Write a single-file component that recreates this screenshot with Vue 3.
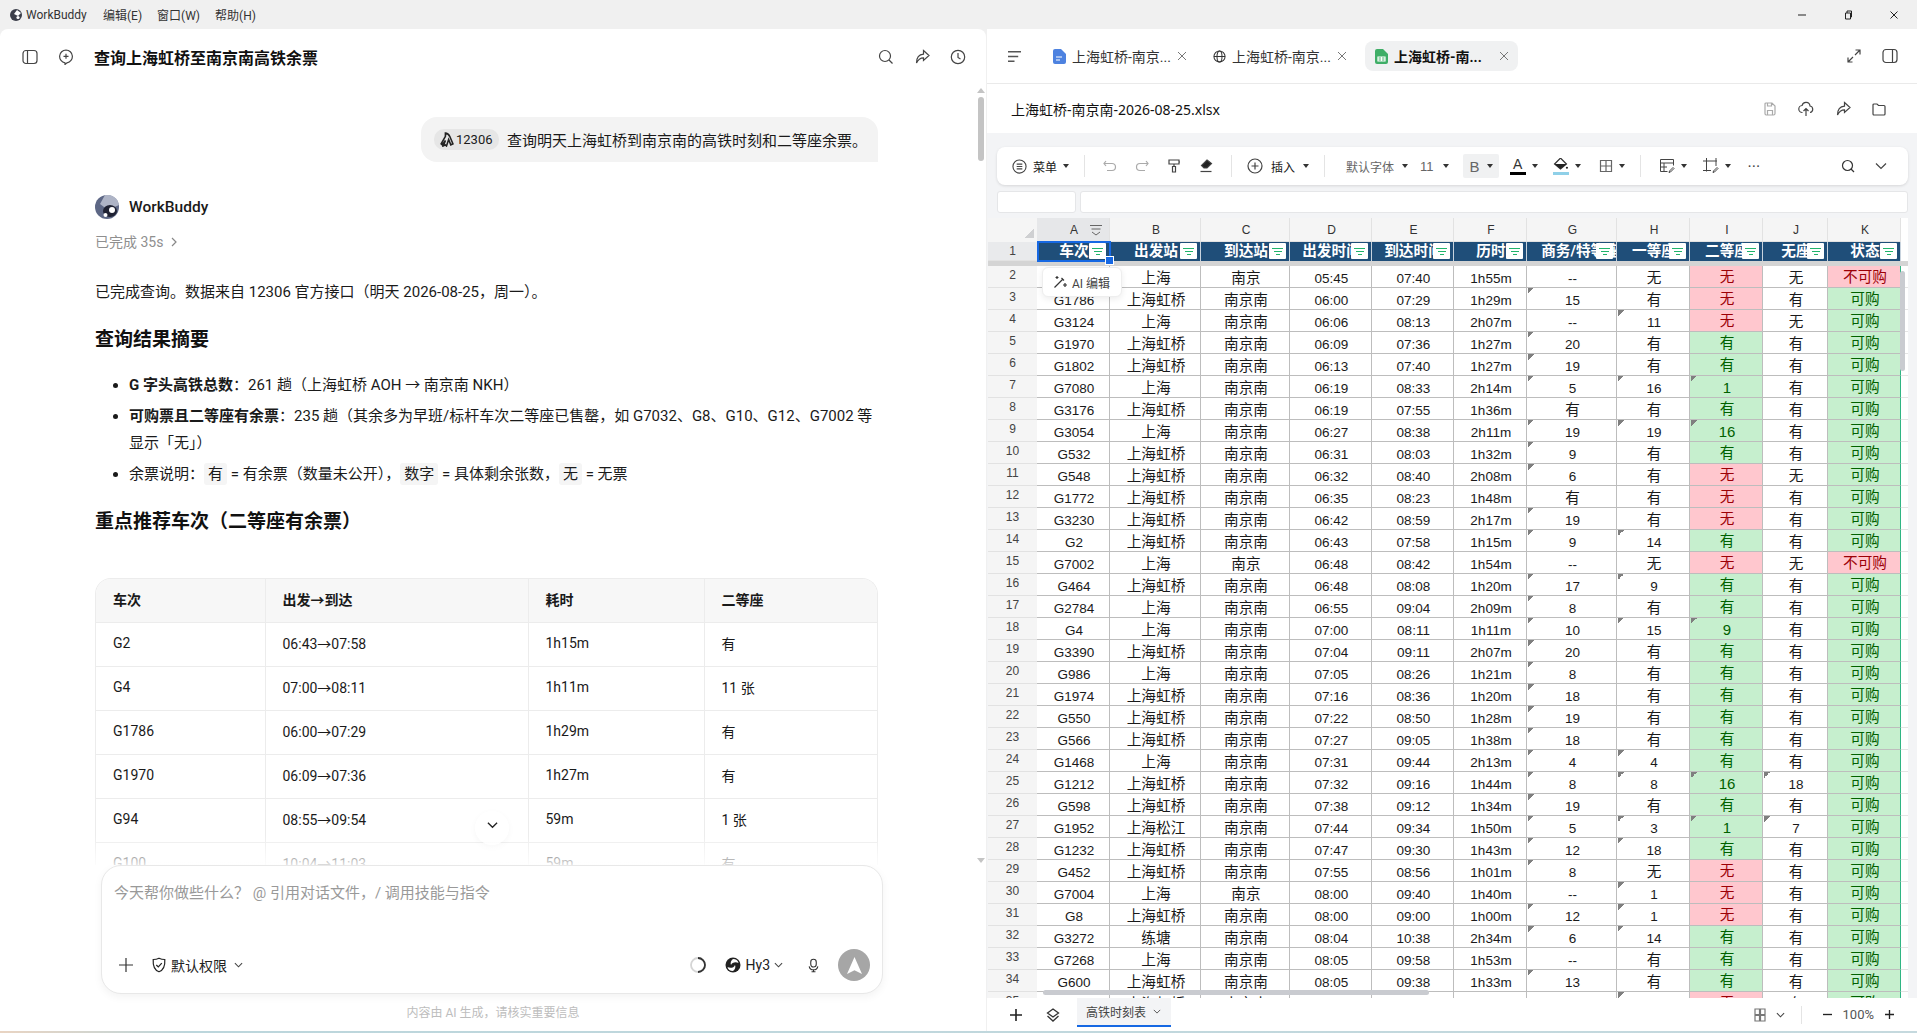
<script setup>
const columns = ['A', 'B', 'C', 'D', 'E', 'F', 'G', 'H', 'I', 'J', 'K']
const headers = ['车次', '出发站', '到达站', '出发时间', '到达时间', '历时', '商务/特等座', '一等座', '二等座', '无座', '状态']

// 一个星号 = 单元格左上角有批注三角
const raw = [
  '- 上海 南京 05:45 07:40 1h55m -- 无 无 无 不可购',
  'G1786 上海虹桥 南京南 06:00 07:29 1h29m 15* 有 无 有 可购',
  'G3124 上海 南京南 06:06 08:13 2h07m -- 11* 无 无 可购',
  'G1970 上海虹桥 南京南 06:09 07:36 1h27m 20* 有 有 有 可购',
  'G1802 上海虹桥 南京南 06:13 07:40 1h27m 19* 有 有 有 可购',
  'G7080 上海 南京南 06:19 08:33 2h14m 5* 16* 1* 有 可购',
  'G3176 上海虹桥 南京南 06:19 07:55 1h36m 有 有 有 有 可购',
  'G3054 上海 南京南 06:27 08:38 2h11m 19* 19* 16* 有 可购',
  'G532 上海虹桥 南京南 06:31 08:03 1h32m 9* 有 有 有 可购',
  'G548 上海虹桥 南京南 06:32 08:40 2h08m 6* 有 无 无 可购',
  'G1772 上海虹桥 南京南 06:35 08:23 1h48m 有 有 无 有 可购',
  'G3230 上海虹桥 南京南 06:42 08:59 2h17m 19* 有 无 有 可购',
  'G2 上海虹桥 南京南 06:43 07:58 1h15m 9* 14* 有 有 可购',
  'G7002 上海 南京 06:48 08:42 1h54m -- 无 无 无 不可购',
  'G464 上海虹桥 南京南 06:48 08:08 1h20m 17* 9* 有 有 可购',
  'G2784 上海 南京南 06:55 09:04 2h09m 8* 有 有 有 可购',
  'G4 上海 南京南 07:00 08:11 1h11m 10* 15* 9* 有 可购',
  'G3390 上海虹桥 南京南 07:04 09:11 2h07m 20* 有 有 有 可购',
  'G986 上海 南京南 07:05 08:26 1h21m 8* 有 有 有 可购',
  'G1974 上海虹桥 南京南 07:16 08:36 1h20m 18* 有 有 有 可购',
  'G550 上海虹桥 南京南 07:22 08:50 1h28m 19* 有 有 有 可购',
  'G566 上海虹桥 南京南 07:27 09:05 1h38m 18* 有 有 有 可购',
  'G1468 上海 南京南 07:31 09:44 2h13m 4* 4* 有 有 可购',
  'G1212 上海虹桥 南京南 07:32 09:16 1h44m 8* 8* 16* 18* 可购',
  'G598 上海虹桥 南京南 07:38 09:12 1h34m 19* 有 有 有 可购',
  'G1952 上海松江 南京南 07:44 09:34 1h50m 5* 3* 1* 7* 可购',
  'G1232 上海虹桥 南京南 07:47 09:30 1h43m 12* 18* 有 有 可购',
  'G452 上海虹桥 南京南 07:55 08:56 1h01m 8* 无 无 有 可购',
  'G7004 上海 南京 08:00 09:40 1h40m -- 1* 无 有 可购',
  'G8 上海虹桥 南京南 08:00 09:00 1h00m 12* 1* 无 有 可购',
  'G3272 练塘 南京南 08:04 10:38 2h34m 6* 14* 有 有 可购',
  'G7268 上海 南京南 08:05 09:58 1h53m -- 有 有 有 可购',
  'G600 上海虹桥 南京南 08:05 09:38 1h33m 13* 有 有 有 可购',
  'G7006 上海虹桥 南京南 08:09 09:51 1h42m 7 9* 无 有 可购',
]

const rows = raw.map((line, r) => ({
  num: r + 2,
  cells: line.split(' ').map((v, c) => {
    const text = v === '-' ? '' : v.replace('*', '')
    const classes = [/[\u4e00-\u9fff]/.test(text) ? 'cjk' : 'num']
    if (v.endsWith('*')) classes.push('flag')
    if (c === 8) classes.push(text === '无' ? 'bad' : 'good')
    if (c === 10) classes.push(text === '不可购' ? 'bad' : 'good')
    return { text, classes }
  }),
}))

const trains = [
  ['G2', '06:43→07:58', '1h15m', '有'],
  ['G4', '07:00→08:11', '1h11m', '11 张'],
  ['G1786', '06:00→07:29', '1h29m', '有'],
  ['G1970', '06:09→07:36', '1h27m', '有'],
  ['G94', '08:55→09:54', '59m', '1 张'],
  ['G100', '10:04→11:03', '59m', '有'],
]
</script>

<template>
  <div class="app">
    <div class="titlebar">
      <svg class="tb-logo" viewBox="0 0 12 12"><circle cx="6" cy="6" r="6" fill="#3c3f4a" /><path d="M7 1 11 4 8 7 4 5Z" fill="#fff" /><circle cx="8" cy="8.5" r="1.6" fill="#fff" /></svg>
      <span class="tb-name">WorkBuddy</span>
      <span class="tb-menu">编辑(E)</span>
      <span class="tb-menu">窗口(W)</span>
      <span class="tb-menu">帮助(H)</span>
      <div class="winctl">
        <svg viewBox="0 0 10 10"><path d="M1 5h8" /></svg>
        <svg viewBox="0 0 10 10"><path d="M2.5 3h5v6h-5zM4 3V1h4.500v6H7.500" /></svg>
        <svg viewBox="0 0 10 10"><path d="M1.500 1.500l7 7M8.500 1.500l-7 7" /></svg>
      </div>
    </div>

    <div class="main">
      <section class="left">
        <header class="chat-head">
          <svg class="ic16" viewBox="0 0 16 16"><rect x="1" y="1.500" width="14" height="13" rx="3" /><path d="M5.500 2v12" /></svg>
          <svg class="ic16 new-chat" viewBox="0 0 16 16"><path d="M8 1a6.500 6.500 0 0 1 1 12.900L7 15.500v-1.600A6.500 6.500 0 0 1 8 1ZM8 4.800v5M5.500 7.300h5" /></svg>
          <h1 class="chat-title">查询上海虹桥至南京南高铁余票</h1>
          <div class="head-tools">
            <svg class="ic16" viewBox="0 0 16 16"><circle cx="7" cy="7" r="5.500" /><path d="m11 11 3.500 3.500" /></svg>
            <svg class="ic16" viewBox="0 0 16 16"><path d="M9.500 1.500 15 6.500l-5.500 5V8.800C6 8.800 4 10.500 2.500 14c0-5.500 2.500-8.500 7-8.900Z" /></svg>
            <svg class="ic16" viewBox="0 0 16 16"><circle cx="8" cy="8" r="6.700" /><path d="M8 4v4.500l2.500 1.500" /></svg>
          </div>
        </header>

        <div class="chat">
          <div class="bubble">
            <span class="chip">
              <svg viewBox="0 0 14 14"><path d="M6 1c2 0 3 1 4 3l3 7-2 1-2-5-2 6-1-1-2 1 2-5-3 4-1-1 4-7Z" fill="none" stroke="#222" stroke-width="1.500" /></svg>
              12306
            </span>
            查询明天上海虹桥到南京南的高铁时刻和二等座余票。
          </div>

          <div class="bot">
            <svg class="avatar" viewBox="0 0 24 24">
              <circle cx="12" cy="12" r="12" fill="#5d6785" />
              <path d="M10 0a12 12 0 0 1 14 10L13 15 5 9Z" fill="#aeb4c6" />
              <ellipse cx="15" cy="16" rx="7" ry="6" fill="#1f2233" />
              <circle cx="17" cy="15" r="3" fill="#fff" />
              <circle cx="10.500" cy="20" r="2" fill="#fff" />
            </svg>
            <span>WorkBuddy</span>
          </div>
          <div class="done">已完成 35s
            <svg viewBox="0 0 10 10"><path d="m3 1 4 4-4 4" /></svg>
          </div>

          <p class="para">已完成查询。数据来自 12306 官方接口（明天 2026-08-25，周一）。</p>
          <h2 class="h1st">查询结果摘要</h2>
          <ul class="summary">
            <li><b>G 字头高铁总数</b>：261 趟（上海虹桥 AOH → 南京南 NKH）</li>
            <li><b>可购票且二等座有余票</b>：235 趟（其余多为早班/标杆车次二等座已售罄，如 G7032、G8、G10、G12、G7002 等显示「无」）</li>
            <li>余票说明：<code>有</code> = 有余票（数量未公开），<code>数字</code> = 具体剩余张数，<code>无</code> = 无票</li>
          </ul>
          <h2 class="h2nd">重点推荐车次（二等座有余票）</h2>

          <div class="table-wrap">
            <table>
              <thead>
                <tr><th>车次</th><th>出发→到达</th><th>耗时</th><th>二等座</th></tr>
              </thead>
              <tbody>
                <tr v-for="t in trains" :key="t[0]">
                  <td v-for="v in t" :key="v">{{ v }}</td>
                </tr>
              </tbody>
            </table>
          </div>

          <div class="to-bottom">
            <svg viewBox="0 0 12 8"><path d="m1 1.500 5 5 5-5" /></svg>
          </div>
          <div class="fade"></div>
          <div class="chat-thumb"></div>
          <svg class="arrow-up" viewBox="0 0 8 5"><path d="M4 0 8 5H0Z" /></svg>
          <svg class="arrow-down" viewBox="0 0 8 5"><path d="M0 0h8L4 5Z" /></svg>
        </div>

        <div class="composer">
          <div class="placeholder">今天帮你做些什么？ @ 引用对话文件，/ 调用技能与指令</div>
          <div class="comp-row">
            <svg class="plus" viewBox="0 0 14 14"><path d="M7 0v14M0 7h14" /></svg>
            <svg class="perm" viewBox="0 0 16 16"><path d="M8 1.200c2 1 3.500 1.300 5.800 1.300 .4 6-1 10.500-5.800 12.300C3.200 13 1.800 8.500 2.200 2.500 4.500 2.500 6 2.200 8 1.200Z" /><path d="m5.300 8 2 2 3.500-3.800" /></svg>
            <span class="perm-text">默认权限</span>
            <svg class="chev" viewBox="0 0 10 6"><path d="m1 1 4 4 4-4" /></svg>
            <div class="comp-right">
              <svg class="ring" viewBox="0 0 18 18"><circle cx="9" cy="9" r="7" stroke="#d5d5d5" /><path d="M9 2a7 7 0 0 1 0 14" stroke="#333" /></svg>
              <svg class="hy" viewBox="0 0 16 16"><circle cx="8" cy="8" r="7.500" fill="#222" /><path d="M8 2c3 0 5 1.500 5.500 4C11 4.500 7 5 6 8 5 6 6 3.500 8 2ZM8 14c-3 0-5-1.500-5.500-4C5 11.500 9 11 10 8c1 2 0 4.500-2 6Z" fill="#fff" /></svg>
              <span class="hy-text">Hy3</span>
              <svg class="chev" viewBox="0 0 10 6"><path d="m1 1 4 4 4-4" /></svg>
              <svg class="mic" viewBox="0 0 14 18"><rect x="3.500" y="1" width="7" height="10" rx="3.500" /><path d="M1.500 10c.5 3 2.500 4.500 5.500 4.500s5-1.500 5.500-4.500M7 14.500V17M4.500 17h5" /></svg>
              <div class="send">
                <svg viewBox="0 0 16 18"><path d="M8 0 16 18 8 14 0 18Z" fill="#fff" /></svg>
              </div>
            </div>
          </div>
        </div>
        <div class="disclaimer">内容由 AI 生成，请核实重要信息</div>
      </section>

      <section class="right">
        <div class="tabs">
          <svg class="burger" viewBox="0 0 16 14"><path d="M1 2h14M1 7h11M1 12h7" /></svg>
          <div class="tab first">
            <svg class="tab-ic" viewBox="0 0 13 15"><path d="M2 0h6l5 5v8a2 2 0 0 1-2 2H2a2 2 0 0 1-2-2V2a2 2 0 0 1 2-2Z" fill="#4d82e0" /><path d="M3 8h6M3 11h4" stroke="#fff" stroke-width="1.200" /></svg>
            <span class="tab-text">上海虹桥-南京...</span>
            <svg class="tab-x" viewBox="0 0 10 10"><path d="m1 1 8 8M9 1 1 9" /></svg>
          </div>
          <div class="tab">
            <svg class="tab-ic" viewBox="0 0 14 14"><g fill="none" stroke="#333" stroke-width="1.100"><circle cx="7" cy="7" r="6" /><ellipse cx="7" cy="7" rx="2.700" ry="6" /><path d="M1 7h12" /></g></svg>
            <span class="tab-text">上海虹桥-南京...</span>
            <svg class="tab-x" viewBox="0 0 10 10"><path d="m1 1 8 8M9 1 1 9" /></svg>
          </div>
          <div class="tab active">
            <svg class="tab-ic" viewBox="0 0 13 15"><path d="M2 0h6l5 5v8a2 2 0 0 1-2 2H2a2 2 0 0 1-2-2V2a2 2 0 0 1 2-2Z" fill="#3fae67" /><path d="M3 8h7v4H3zM3 10h7M6.500 8v4" stroke="#fff" fill="none" /></svg>
            <span class="tab-text">上海虹桥-南...</span>
            <svg class="tab-x" viewBox="0 0 10 10"><path d="m1 1 8 8M9 1 1 9" /></svg>
          </div>
          <div class="tab-tools">
            <svg class="ic14" viewBox="0 0 14 14"><path d="M8.500 1H13v4.500M13 1 8 6M5.500 13H1V8.500M1 13l5-5" /></svg>
            <svg class="ic16" viewBox="0 0 16 16"><rect x="1" y="1.500" width="14" height="13" rx="3" /><path d="M10.500 2v12" /></svg>
          </div>
        </div>

        <div class="filebar">
          <span class="filename">上海虹桥-南京南-2026-08-25.xlsx</span>
          <div class="file-tools">
            <svg class="ic14 dim" viewBox="0 0 14 14"><path d="M3 1h6l3 3v7.500a1.500 1.500 0 0 1-1.500 1.500h-7.500A1.500 1.500 0 0 1 2 11.500V2a1 1 0 0 1 1-1ZM4.500 1v3h4V1M4.500 13V8.500h5V13" /></svg>
            <svg class="ic16" viewBox="0 0 16 16"><path d="M4.500 11.500a3.500 3.500 0 0 1-.4-7A4 4 0 0 1 12 5a3.300 3.300 0 0 1 0 6.500M8 15V7.500M5.500 10 8 7.500l2.500 2.500" /></svg>
            <svg class="ic16" viewBox="0 0 16 16"><path d="M9.500 1.500 15 6.500l-5.500 5V8.800C6 8.800 4 10.500 2.500 14c0-5.500 2.500-8.500 7-8.900Z" /></svg>
            <svg class="ic14" viewBox="0 0 14 14"><path d="M1 3a1 1 0 0 1 1-1h3l1.500 1.500H12a1 1 0 0 1 1 1V12a1 1 0 0 1-1 1H2a1 1 0 0 1-1-1Z" /></svg>
          </div>
        </div>

        <div class="sheet">
          <div class="toolbar">
            <div class="g menu">
              <svg class="ic15" viewBox="0 0 16 16"><circle cx="8" cy="8" r="7" /><path d="M5 5.500h6M5 8h6M5 10.500h6" /></svg>
              <span>菜单</span><i class="caret"></i>
            </div>
            <i class="sep"></i>
            <div class="g wide">
              <svg class="ic14 dim" viewBox="0 0 14 14"><path d="M3 2 1 4.500 3 7M1.500 4.500H9a3.500 3.500 0 0 1 0 7H4" /></svg>
              <svg class="ic14 dim" viewBox="0 0 14 14"><path d="m11 2 2 2.500L11 7M12.500 4.500H5a3.500 3.500 0 0 0 0 7h5" /></svg>
              <svg class="ic14" viewBox="0 0 14 14"><path d="M2 1h10v4H2zM12 3h1M7 5v2.500h0M5.500 7.500h3V13h-3z" /></svg>
              <svg class="ic14" viewBox="0 0 14 14"><path d="m8 1 4.500 3.500L8 9H5L2.500 6.500Z" fill="#222" /><path d="M1.500 12.500h11" /></svg>
            </div>
            <i class="sep"></i>
            <div class="g insert">
              <svg class="ic16" viewBox="0 0 16 16"><circle cx="8" cy="8" r="7" /><path d="M8 4.500v7M4.500 8h7" /></svg>
              <span>插入</span><i class="caret"></i>
            </div>
            <i class="sep"></i>
            <div class="g font">
              <span class="soft">默认字体</span><i class="caret"></i>
            </div>
            <div class="g size">
              <span class="soft latin">11</span><i class="caret"></i>
            </div>
            <div class="g bold-box">
              <span class="soft latin big">B</span><i class="caret"></i>
            </div>
            <div class="g next tight">
              <span class="color-a"><span>A</span></span><i class="caret"></i>
            </div>
            <div class="g next">
              <span class="color-fill">
                <svg viewBox="0 0 14 11"><path d="M7 0 12.500 5.500 7 10 1.500 5.500Z" fill="none" stroke="#333" /><path d="M1.500 5.500h11L7 10Z" fill="#222" /><circle cx="13" cy="9" r="1" fill="#222" /></svg>
              </span><i class="caret"></i>
            </div>
            <div class="g next loose">
              <svg class="ic14 grid-ic" viewBox="0 0 14 14"><path d="M1.500 1.500h11v11h-11zM7 1.500v11M1.500 7h11" /></svg>
              <i class="caret"></i>
            </div>
            <i class="sep"></i>
            <div class="g after-sep">
              <svg class="ic16 ic-dark" viewBox="0 0 16 16"><path d="M1.500 1.500h13v6M1.500 1.500v12h7M1.500 5h13M5 5v8.500M1.500 9H8" /><path d="M14 9.500 10.500 13l-.5 1.500 1.500-.5L15 10.500Z" /></svg>
              <i class="caret"></i>
            </div>
            <div class="g next crop">
              <svg class="ic16 ic-dark" viewBox="0 0 16 16"><path d="M3.500 0v13.500M0 3h14M13 0v8M0 12.500h8" /><path d="M14 9.500 10.500 13l-.5 1.500 1.500-.5L15 10.500Z" /></svg>
              <i class="caret"></i>
            </div>
            <span class="dots">···</span>
            <svg class="ic14 tool-search" viewBox="0 0 14 14"><circle cx="6.500" cy="6.500" r="5" /><path d="m10 10 3 3" /></svg>
            <svg class="tool-chev" viewBox="0 0 12 8"><path d="m1 1.500 5 5 5-5" /></svg>
          </div>

          <div class="formula">
            <div class="namebox"></div>
            <div class="fx"></div>
          </div>

          <div class="grid">
            <div class="row col-heads">
              <div class="corner"><i></i></div>
              <div v-for="(c, i) in columns" :key="c" class="col-head" :class="{ sel: i === 0 }">
                {{ c }}
                <svg v-if="i === 0" viewBox="0 0 14 12"><path d="M1 1.500h12M2.500 5h9M3 8l4 3 4-3" /></svg>
              </div>
              <div class="filler plain"></div>
            </div>

            <div class="row row-one">
              <div class="row-num first">1</div>
              <div v-for="h in headers" :key="h" class="head-cell">
                <span>{{ h }}</span>
                <i class="filter"><b></b><b></b><b></b></i>
              </div>
              <div class="filler plain"></div>
              <div class="selection"><i></i></div>
            </div>
            <div class="freeze"></div>

            <div v-for="r in rows" :key="r.num" class="row data">
              <div class="row-num">{{ r.num }}</div>
              <div v-for="(cell, i) in r.cells" :key="i" class="cell" :class="cell.classes">{{ cell.text }}</div>
              <div class="filler"></div>
            </div>

            <div class="ai-pop">
              <svg viewBox="0 0 14 14"><path d="m1.500 12.500 8-8M8.500 3l2.500 2.500M4 1v3M2.500 2.500h3M12 8v4M10 10h4" /></svg>
              <span>AI 编辑</span>
            </div>
            <div class="vbar"></div>
            <div class="hbar"></div>
          </div>

          <div class="sheet-foot">
            <svg class="ft-plus" viewBox="0 0 14 14"><path d="M7 1v12M1 7h12" /></svg>
            <svg class="ft-layers" viewBox="0 0 14 14"><path d="M7 1 12.500 5 7 9 1.500 5ZM1.500 8 7 13l5.500-5" /></svg>
            <div class="sheet-tab">高铁时刻表
              <svg viewBox="0 0 10 6"><path d="m1 1 4 4 4-4" /></svg>
            </div>
            <div class="foot-right">
              <svg class="ft-view" viewBox="0 0 12 14"><path d="M1 1h4.500v5.500H1zM6.500 1H11v5.500H6.500zM1 7.500h4.500V13H1zM6.500 7.500H11V13H6.500z" /></svg>
              <svg class="chev" viewBox="0 0 10 6"><path d="m1 1 4 4 4-4" /></svg>
              <i class="foot-sep"></i>
              <svg class="ft-zoom" viewBox="0 0 10 10"><path d="M0 5h10" /></svg>
              <span class="zoom-val">100%</span>
              <svg class="ft-zoom" viewBox="0 0 10 10"><path d="M0 5h10M5 0v10" /></svg>
            </div>
          </div>
        </div>
      </section>
    </div>
    <div class="wallpaper"></div>
  </div>
</template>

<style>
html, body {
  margin: 0;
  overflow: hidden;
}
</style>

<style scoped>
.app {
  width: 1917px;
  height: 1033px;
  display: flex;
  flex-direction: column;
  background: #f0f0f0;
  font-family: Roboto, "Noto Sans CJK SC", sans-serif;
  color: #1a1a1a;
  overflow: hidden;
}

svg {
  display: block;
  flex: none;
  fill: none;
  stroke: #444;
  stroke-width: 1.2;
}

/* title bar */
.titlebar {
  height: 29px;
  flex: none;
  display: flex;
  align-items: center;
  font-size: 12px;
  color: #333;
  padding-left: 10px;
}
.tb-logo { width: 12px; height: 12px; stroke: none; }
.tb-name { margin-left: 4px; width: 77px; }
.tb-menu { margin-right: 15px; }
.winctl {
  margin-left: auto;
  display: flex;
  gap: 36px;
  padding-right: 18px;
}
.winctl svg { width: 10px; height: 10px; stroke: #222; stroke-width: 1; }

.main {
  flex: 1;
  display: flex;
  min-height: 0;
}

/* left panel */
.left {
  width: 986px;
  flex: none;
  background: #fff;
  border-radius: 8px 8px 0 0;
  display: flex;
  flex-direction: column;
}
.ic14 { width: 14px; height: 14px; }
.ic15 { width: 15px; height: 15px; }
.ic16 { width: 16px; height: 16px; }
.dim { stroke: #aaa; }
.chat-head {
  height: 56px;
  flex: none;
  display: flex;
  align-items: center;
  padding: 0 20px 0 22px;
}
.new-chat { margin-left: 20px; }
.chat-title {
  margin: 0 0 0 20px;
  font-size: 16px;
  font-weight: 700;
  color: #111;
}
.head-tools {
  margin-left: auto;
  display: flex;
  gap: 20px;
}

.chat {
  flex: 1;
  min-height: 0;
  position: relative;
  overflow: hidden;
  padding: 32px 108px 0 95px;
  font-size: 15px;
}
.bubble {
  width: fit-content;
  margin-left: auto;
  height: 45px;
  display: flex;
  align-items: center;
  gap: 8px;
  padding: 0 11px 0 13px;
  background: #f3f3f3;
  border-radius: 16px 16px 0 16px;
  font-size: 15px;
  white-space: nowrap;
}
.chip {
  display: flex;
  align-items: center;
  gap: 2px;
  height: 21px;
  width: 65px;
  box-sizing: border-box;
  padding-left: 5px;
  border-radius: 10px;
  background: #e6e6e6;
  font-size: 13px;
}
.chip svg { width: 15px; height: 15px; }
.bot {
  margin-top: 33px;
  display: flex;
  align-items: center;
  gap: 10px;
  height: 24px;
  font-size: 15.500px;
  font-weight: 500;
}
.avatar { width: 24px; height: 24px; stroke: none; }
.done {
  margin-top: 13px;
  height: 20px;
  line-height: 20px;
  display: flex;
  align-items: center;
  gap: 6px;
  font-size: 14px;
  color: #8f8f8f;
}
.done svg { width: 10px; height: 10px; stroke: #888; }
.para {
  margin: 27px 0 0;
  line-height: 26px;
}
.h1st, .h2nd {
  margin: 21px 0 0;
  font-size: 19px;
  line-height: 28px;
  font-weight: 700;
  color: #111;
}
.summary {
  margin: 18px 0 0;
  padding: 0 0 0 34px;
}
.summary li {
  line-height: 26.500px;
  margin-bottom: 4.500px;
}
.summary li:last-child { margin-bottom: 0; }
.summary code {
  font-family: inherit;
  background: #f5f5f5;
  border-radius: 3px;
  padding: 2px 4px;
}
.table-wrap {
  margin-top: 42px;
  border: 1px solid #ececec;
  border-bottom: 0;
  border-radius: 16px 16px 0 0;
  overflow: hidden;
}
table {
  width: 100%;
  border-collapse: collapse;
  table-layout: fixed;
  font-size: 14px;
}
th:nth-child(1) { width: 169px; }
th:nth-child(2) { width: 263px; }
th:nth-child(3) { width: 176px; }
th, td {
  height: 44px;
  box-sizing: border-box;
  padding: 0 17px 2px;
  text-align: left;
  border-bottom: 1px solid #ececec;
  border-right: 1px solid #ececec;
}
th:last-child, td:last-child { border-right: 0; }
th {
  height: 43px;
  background: #f7f7f7;
  font-weight: 700;
}
.to-bottom {
  position: absolute;
  left: 475px;
  top: 726px;
  width: 34px;
  height: 34px;
  border-radius: 50%;
  background: rgba(255, 255, 255, 0.85);
  box-shadow: 0 2px 6px rgba(0, 0, 0, 0.04);
}
.to-bottom svg {
  width: 11px;
  height: 8px;
  margin: 10px auto 0;
  stroke: #222;
  stroke-width: 1.4;
}
.fade {
  position: absolute;
  left: 0;
  right: 20px;
  bottom: 0;
  height: 30px;
  background: linear-gradient(rgba(255, 255, 255, 0), rgba(255, 255, 255, 0.85));
}
.chat-thumb {
  position: absolute;
  left: 978px;
  top: 12px;
  width: 6px;
  height: 64px;
  border-radius: 3px;
  background: #c4c4c4;
}
.arrow-up, .arrow-down {
  position: absolute;
  left: 977px;
  width: 8px;
  height: 5px;
  fill: #c4c4c4;
  stroke: none;
}
.arrow-up { top: 3px; }
.arrow-down { top: 773px; }

.composer {
  flex: none;
  height: 129px;
  box-sizing: border-box;
  margin-left: 101px;
  width: 782px;
  border: 1px solid #e8e8e8;
  border-radius: 20px;
  box-shadow: 0 3px 8px rgba(0, 0, 0, 0.05);
  padding: 17px 12px 12px 12px;
  display: flex;
  flex-direction: column;
  justify-content: space-between;
  background: #fff;
}
.placeholder {
  font-size: 15px;
  line-height: 20px;
  color: #999;
}
.comp-row {
  display: flex;
  align-items: center;
  font-size: 14px;
}
.plus { width: 14px; height: 14px; margin-left: 5px; stroke: #333; stroke-width: 1.2; }
.perm { width: 16px; height: 16px; margin-left: 18px; stroke: #222; }
.perm-text { margin-left: 4px; color: #222; }
.chev { width: 9px; height: 6px; margin-left: 7px; stroke: #444; }
.comp-right {
  margin-left: auto;
  display: flex;
  align-items: center;
}
.ring { width: 18px; height: 18px; stroke-width: 1.8; }
.hy { width: 16px; height: 16px; margin-left: 18px; stroke: none; }
.hy-text { margin-left: 5px; color: #222; font-size: 14px; }
.comp-right .chev { margin-left: 4px; }
.mic { width: 11px; height: 15px; margin-left: 25px; stroke: #333; stroke-width: 1.4; }
.send {
  width: 32px;
  height: 32px;
  margin-left: 19px;
  border-radius: 50%;
  background: #a6a6a6;
  display: flex;
  align-items: center;
  justify-content: center;
}
.send svg { width: 15px; height: 17px; stroke: none; }
.disclaimer {
  flex: none;
  height: 37px;
  padding-top: 11px;
  box-sizing: border-box;
  text-align: center;
  font-size: 12px;
  line-height: 17px;
  color: #bdbdbd;
}

/* right panel */
.right {
  flex: 1;
  min-width: 0;
  margin-left: 1px;
  background: #fff;
  display: flex;
  flex-direction: column;
}
.tabs {
  height: 55px;
  flex: none;
  box-sizing: border-box;
  border-bottom: 1px solid #eaeaea;
  display: flex;
  align-items: center;
  padding-left: 20px;
}
.burger { width: 15px; height: 13px; stroke: #555; stroke-width: 1.6; }
.tab {
  width: 153px;
  height: 30px;
  box-sizing: border-box;
  display: flex;
  align-items: center;
  gap: 6px;
  padding: 0 9px 0 10px;
  margin-left: 7px;
  border-radius: 8px;
  font-size: 14px;
  color: #333;
}
.tab.first { margin-left: 21px; }
.tab.active {
  background: #f0f1f2;
  font-weight: 700;
  color: #111;
  margin-left: 9px;
}
.tab-ic { width: 13px; height: 15px; stroke: none; }
.tab-text { flex: 1; white-space: nowrap; overflow: hidden; }
.tab-x { width: 10px; height: 10px; stroke: #777; stroke-width: 1; }
.tab-tools {
  margin-left: auto;
  display: flex;
  align-items: center;
  gap: 21px;
  padding-right: 19px;
}
.filebar {
  height: 49px;
  flex: none;
  display: flex;
  align-items: center;
  padding-left: 24px;
}
.filename { font-family: "Noto Sans", "Noto Sans CJK SC", sans-serif; font-size: 14px; color: #111; }
.file-tools {
  margin-left: auto;
  display: flex;
  align-items: center;
  gap: 21px;
  padding-right: 31px;
}

.sheet {
  flex: 1;
  min-height: 0;
  background: #f3f4f6;
  display: flex;
  flex-direction: column;
  padding-top: 14px;
}
.toolbar {
  height: 38px;
  flex: none;
  margin: 0 9px 0 10px;
  background: #fff;
  border-radius: 8px;
  box-shadow: 0 1px 3px rgba(0, 0, 0, 0.12);
  display: flex;
  align-items: center;
  font-size: 12px;
  padding-left: 15px;
}
.g {
  display: flex;
  align-items: center;
  gap: 6px;
}
.sep {
  width: 1px;
  height: 22px;
  background: #e4e4e4;
  margin: 0 15px;
}
.caret {
  width: 0;
  height: 0;
  border-left: 3.500px solid transparent;
  border-right: 3.500px solid transparent;
  border-top: 4px solid #333;
}
.wide { gap: 18px; margin: 0 3px; }
.insert { gap: 8px; }
.soft { color: #666; }
.latin { font-family: "Liberation Sans", sans-serif; font-size: 13px; }
.big { font-size: 15px; }
.font { margin-left: 6px; gap: 8px; }
.size { margin-left: 12px; gap: 9px; }
.bold-box {
  margin-left: 14px;
  width: 36px;
  height: 24px;
  box-sizing: border-box;
  background: #f0f1f2;
  border-radius: 2px;
  padding-left: 7px;
  gap: 7px;
}
.next { margin-left: 15px; }
.next.tight { margin-left: 11px; }
.next.loose { margin-left: 18px; }
.next.crop { margin-left: 16px; }
.after-sep { margin-left: 3px; }
.color-a {
  display: flex;
  flex-direction: column;
  width: 16px;
  height: 18px;
  box-sizing: border-box;
  border-bottom: 3px solid #000;
  text-align: center;
  font-family: "Liberation Sans", sans-serif;
  font-size: 14px;
  line-height: 15px;
  color: #333;
}
.color-fill {
  width: 16px;
  height: 17px;
  box-sizing: border-box;
  border-bottom: 3px solid #8fd0e8;
}
.color-fill svg { width: 15px; height: 12px; stroke: none; }
.grid-ic { stroke: #666; }
.ic-dark { stroke: #444; stroke-width: 1; }
.dots { margin-left: 17px; font-size: 16px; color: #444; letter-spacing: 0; }
.tool-search { margin-left: auto; stroke: #333; }
.tool-chev { width: 12px; height: 8px; margin: 0 21px 0 20px; stroke: #444; }

.formula {
  flex: none;
  margin: 6px 9px 0 10px;
  display: flex;
  gap: 4px;
  height: 22px;
}
.namebox, .fx {
  background: #fff;
  border: 1px solid #e5e6e8;
  border-radius: 3px;
  box-sizing: border-box;
}
.namebox { width: 79px; }
.fx { flex: 1; }

/* grid */
.grid {
  flex: 1;
  min-height: 0;
  margin: 5px 9px 0 1px;
  position: relative;
  overflow: hidden;
  background: #fff;
}
.row {
  display: grid;
  grid-template-columns: 49px 73px 91px 89px 82px 82px 73px 90px 73px 73px 65px 73px 7px;
  position: relative;
}
.col-heads { height: 24px; background: #f5f5f5; }
.corner {
  position: relative;
  background: #f5f5f5;
}
.corner i {
  position: absolute;
  right: 3px;
  bottom: 4px;
  width: 10px;
  height: 10px;
  background: linear-gradient(135deg, transparent 50%, #cfd0d2 50%);
}
.col-head {
  display: flex;
  align-items: center;
  justify-content: center;
  position: relative;
  padding-left: 2px;
  font-family: "Liberation Sans", sans-serif;
  font-size: 12px;
  color: #333;
  box-sizing: border-box;
  border-right: 1px solid #e2e2e2;
  border-bottom: 1px solid #e2e2e2;
}
.col-head.sel { background: #e6e7e9; }
.col-head svg {
  position: absolute;
  right: 6px;
  top: 6px;
  width: 14px;
  height: 12px;
  stroke: #666;
  stroke-width: 1;
}
.filler { background: #fff; box-sizing: border-box; border-bottom: 1px solid #e4e4e4; }
.filler.plain { border: 0; }
.row-one { height: 19px; }
.row-num {
  background: #f5f5f5;
  display: flex;
  align-items: center;
  justify-content: center;
  padding-bottom: 3px;
  box-sizing: border-box;
  font-family: "Liberation Sans", sans-serif;
  font-size: 12px;
  color: #444;
  border-bottom: 1px solid #e2e2e2;
}
.row-num.first { background: #e9eaec; padding-bottom: 0; }
.head-cell {
  background: #1f4e79;
  color: #fff;
  font-size: 14.670px;
  font-weight: 700;
  line-height: 19px;
  text-align: center;
  white-space: nowrap;
  overflow: hidden;
  position: relative;
  box-sizing: border-box;
  border-right: 1px solid #c8d3de;
  display: flex;
  justify-content: center;
  padding-left: 2px;
}
.head-cell span { flex: none; }
.head-cell:nth-child(8) span { margin-left: 16px; }
.filter {
  position: absolute;
  right: 3px;
  top: 1px;
  width: 17px;
  height: 16px;
  background: #fff;
  border-radius: 1px;
  display: flex;
  flex-direction: column;
  align-items: center;
  justify-content: center;
  gap: 2px;
}
.filter b {
  display: block;
  height: 1px;
  width: 11px;
  background: #1fb36b;
}
.filter b:nth-child(2) { width: 8px; }
.filter b:nth-child(3) { width: 4px; }
.selection {
  position: absolute;
  left: 49px;
  top: -1px;
  width: 74px;
  height: 21px;
  box-sizing: border-box;
  border: 2px solid #1668e3;
}
.selection i {
  position: absolute;
  right: -5px;
  bottom: -5px;
  width: 7px;
  height: 7px;
  background: #1668e3;
  border: 1px solid #fff;
  box-sizing: content-box;
}
.freeze { height: 5px; background: #d4d4d4; }
.data { height: 22px; }
.cell {
  box-sizing: border-box;
  padding-left: 2px;
  border-right: 1px solid #bdbdbd;
  border-bottom: 1px solid #bdbdbd;
  text-align: center;
  white-space: nowrap;
  overflow: hidden;
  position: relative;
  color: #1a1a1a;
}
.cell:nth-child(12) { border-right-color: #2fb583; }
.num {
  font-family: "Liberation Sans", sans-serif;
  font-size: 13.500px;
  line-height: 26px;
}
.cjk {
  font-size: 14.670px;
  line-height: 25px;
}
.bad { background: #ffc7ce; color: #9c0006; line-height: 23px; }
.good { background: #c6efce; color: #006100; line-height: 23px; }
.good.num { font-size: 15px; }
.flag::before {
  content: "";
  position: absolute;
  left: 1px;
  top: 0;
  width: 6px;
  height: 6px;
  background: linear-gradient(135deg, #7f7f7f 50%, transparent 50%);
}
.ai-pop {
  position: absolute;
  left: 54px;
  top: 49px;
  width: 80px;
  height: 30px;
  box-sizing: border-box;
  background: #fff;
  border: 1px solid #eeeeee;
  border-radius: 6px;
  box-shadow: 0 2px 6px rgba(0, 0, 0, 0.08);
  display: flex;
  align-items: center;
  gap: 5px;
  padding-left: 10px;
  font-size: 12px;
  color: #444;
}
.ai-pop svg { width: 14px; height: 14px; stroke: #333; }
.vbar {
  position: absolute;
  left: 912px;
  top: 53px;
  width: 5px;
  height: 100px;
  border-radius: 3px;
  background: #c9cbd0;
}
.hbar {
  position: absolute;
  left: 55px;
  top: 772px;
  width: 386px;
  height: 5px;
  border-radius: 3px;
  background: #c9cbd0;
}

.sheet-foot {
  height: 33px;
  flex: none;
  background: #fff;
  display: flex;
  align-items: flex-start;
  padding-left: 22px;
  font-size: 12px;
  color: #444;
}
.ft-plus { width: 14px; height: 14px; margin-top: 10px; stroke: #222; stroke-width: 1.6; }
.ft-layers { width: 14px; height: 14px; margin: 10px 0 0 23px; stroke: #333; stroke-width: 1.3; }
.sheet-tab {
  margin-left: 17px;
  width: 94px;
  height: 29px;
  box-sizing: border-box;
  padding-left: 9px;
  background: #f3f4f6;
  border-bottom: 2px solid #1668e3;
  display: flex;
  align-items: center;
  gap: 7px;
}
.sheet-tab svg { width: 8px; height: 5px; stroke: #555; }
.foot-right {
  margin-left: auto;
  height: 33px;
  display: flex;
  align-items: center;
  padding-right: 23px;
}
.ft-view { width: 12px; height: 14px; margin-right: 3px; stroke: #777; }
.foot-sep { width: 1px; height: 18px; background: #e4e4e4; margin: 0 21px 0 16px; }
.ft-zoom { width: 9px; height: 9px; stroke: #222; stroke-width: 1.5; }
.zoom-val { margin: 0 11px; font-size: 13px; color: #555; }

.wallpaper {
  height: 2px;
  flex: none;
  background: linear-gradient(90deg, #e9d4c2, #bcd6dc 10%, #c5d9de);
}
</style>
